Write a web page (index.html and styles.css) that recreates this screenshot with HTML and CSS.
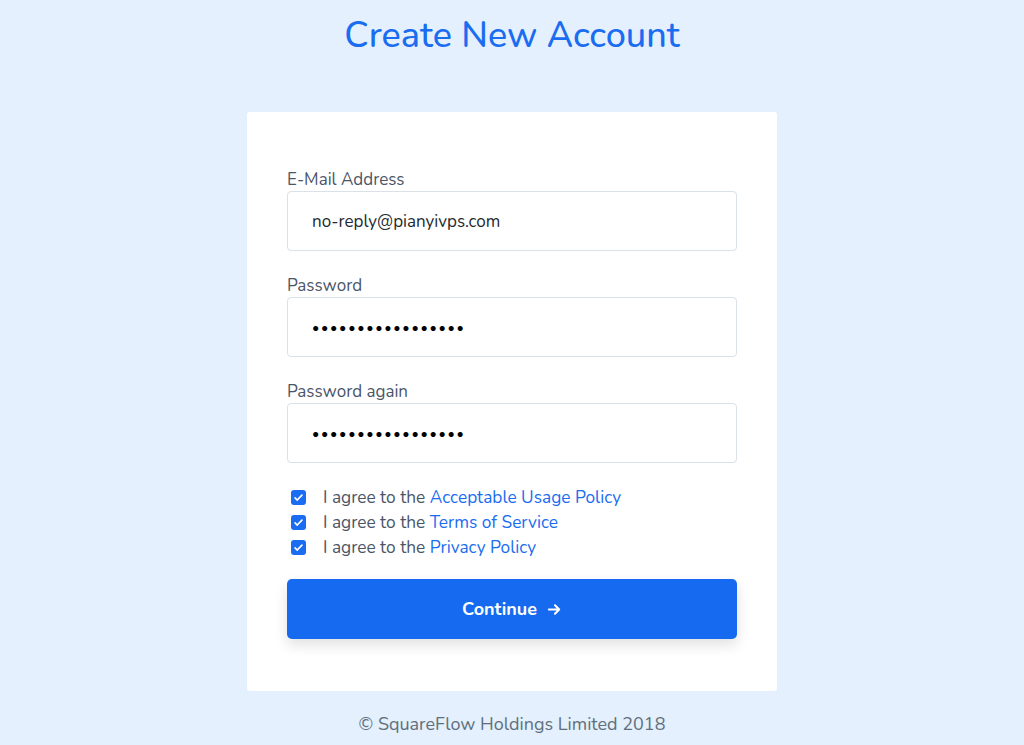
FILE: index.html
```html
<!DOCTYPE html>
<html lang="en">
<head>
    <meta charset="UTF-8">
    <meta name="viewport" content="width=device-width, initial-scale=1.0">
    <title>Create New Account</title>
    <link rel="stylesheet" href="styles.css">
</head>
<body>

    <h1 class="title">Create New Account</h1>

    <form class="card" id="registerForm">
        <div class="field">
            <label class="label" for="email">E-Mail Address</label>
            <input class="input" type="email" id="email" name="email" value="no-reply@pianyivps.com">
        </div>
        <div class="field">
            <label class="label" for="password">Password</label>
            <input class="input input-secret" type="password" id="password" name="password" value="12345678901234567">
        </div>
        <div class="field">
            <label class="label" for="password2">Password again</label>
            <input class="input input-secret" type="password" id="password2" name="password2" value="12345678901234567">
        </div>

        <div class="agree-list">
            <label class="agree">
                <span class="check">
                    <svg viewBox="0 0 16 16" width="11" height="11"><path d="M3 8.5l3.2 3.2L13 4.5" fill="none" stroke="#fff" stroke-width="2.4" stroke-linecap="round" stroke-linejoin="round"/></svg>
                </span>
                I agree to the&nbsp;<a href="#" class="link">Acceptable Usage Policy</a>
            </label>
            <label class="agree">
                <span class="check">
                    <svg viewBox="0 0 16 16" width="11" height="11"><path d="M3 8.5l3.2 3.2L13 4.5" fill="none" stroke="#fff" stroke-width="2.4" stroke-linecap="round" stroke-linejoin="round"/></svg>
                </span>
                I agree to the&nbsp;<a href="#" class="link">Terms of Service</a>
            </label>
            <label class="agree">
                <span class="check">
                    <svg viewBox="0 0 16 16" width="11" height="11"><path d="M3 8.5l3.2 3.2L13 4.5" fill="none" stroke="#fff" stroke-width="2.4" stroke-linecap="round" stroke-linejoin="round"/></svg>
                </span>
                I agree to the&nbsp;<a href="#" class="link">Privacy Policy</a>
            </label>
        </div>

        <button type="submit" class="btn">
            Continue
            <svg viewBox="0 0 16 16" width="15" height="15"><path d="M2 8h11M8.5 3.5L13 8l-4.5 4.5" fill="none" stroke="#fff" stroke-width="2.2" stroke-linecap="round" stroke-linejoin="round"/></svg>
        </button>
    </form>

    <p class="footer">&copy; SquareFlow Holdings Limited 2018</p>

</body>
</html>
```

FILE: styles.css
```css
body {
    font-family: "Nunito", "Lato", "Open Sans", sans-serif;
    background-color: #e4f0fd;
    margin: 0;
    color: #4a5568;
}
.title {
    margin: 0;
    padding-top: 15px;
    line-height: 42px;
    font-size: 36px;
    font-weight: 500;
    text-align: center;
    color: #1a6cf0;
}
.card {
    width: 530px;
    box-sizing: border-box;
    margin: 55px auto 0;
    padding: 56px 40px 52px;
    background: #fff;
    border-radius: 3px;
}
.field {
    margin-bottom: 23px;
}
.label {
    display: block;
    font-size: 17px;
    line-height: 24px;
    margin-bottom: -1px;
    color: #4a5568;
}
.input {
    display: block;
    width: 100%;
    height: 60px;
    box-sizing: border-box;
    padding: 0 24px;
    border: 1px solid #dae1e7;
    border-radius: 4px;
    font-family: inherit;
    font-size: 17px;
    color: #22292f;
    background: #fff;
}
.input-secret {
    font-size: 14px;
    letter-spacing: 1.7px;
    color: #000;
}
.agree-list {
    margin: -1px 0 19px;
}
.agree {
    display: flex;
    align-items: center;
    height: 25px;
    font-size: 17.3px;
    color: #4a5568;
}
.check {
    display: flex;
    align-items: center;
    justify-content: center;
    width: 15px;
    height: 15px;
    margin-left: 4px;
    margin-right: 17px;
    border-radius: 3px;
    background: #1a6cf0;
}
.link {
    color: #1a6cf0;
    text-decoration: none;
}
.btn {
    display: flex;
    align-items: center;
    justify-content: center;
    gap: 10px;
    width: 100%;
    height: 60px;
    border: none;
    border-radius: 5px;
    background-color: #166aef;
    color: #fff;
    font-family: inherit;
    font-size: 18px;
    font-weight: bold;
    cursor: pointer;
    box-shadow: 0 6px 14px rgba(0, 0, 0, 0.12);
}
.footer {
    margin: 21px 0 0;
    line-height: 24px;
    font-size: 18px;
    text-align: center;
    color: #606f7b;
}
```
